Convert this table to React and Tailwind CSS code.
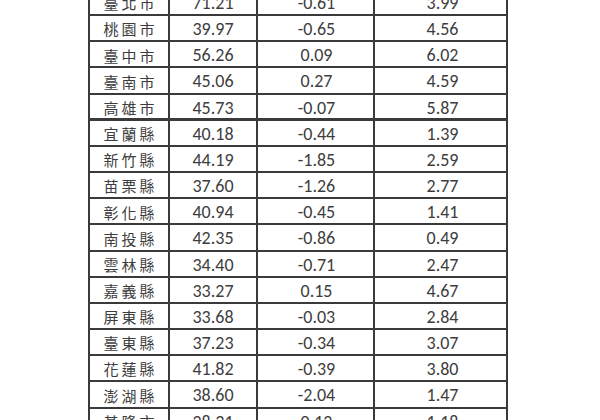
import React from "react";

const rows = [
  ["臺北市", "71.21", "-0.61", "3.99"],
  ["桃園市", "39.97", "-0.65", "4.56"],
  ["臺中市", "56.26", "0.09", "6.02"],
  ["臺南市", "45.06", "0.27", "4.59"],
  ["高雄市", "45.73", "-0.07", "5.87"],
  ["宜蘭縣", "40.18", "-0.44", "1.39"],
  ["新竹縣", "44.19", "-1.85", "2.59"],
  ["苗栗縣", "37.60", "-1.26", "2.77"],
  ["彰化縣", "40.94", "-0.45", "1.41"],
  ["南投縣", "42.35", "-0.86", "0.49"],
  ["雲林縣", "34.40", "-0.71", "2.47"],
  ["嘉義縣", "33.27", "0.15", "4.67"],
  ["屏東縣", "33.68", "-0.03", "2.84"],
  ["臺東縣", "37.23", "-0.34", "3.07"],
  ["花蓮縣", "41.82", "-0.39", "3.80"],
  ["澎湖縣", "38.60", "-2.04", "1.47"],
  ["基隆市", "28.31", "0.12", "1.18"],
];

export default function App() {
  return (
    <div className="w-[600px] h-[420px] overflow-hidden bg-white">
      <div className="ml-[88px] mt-[-10px] w-[420px] border-l-2 border-[#3a3a3a]">
        {rows.map((r, i) => (
          <div
            key={i}
            className={
              i === 4
                ? "grid grid-cols-[80px_88px_117px_133px] h-[26.17px] border-[#3a3a3a] border-b-[3px]"
                : "grid grid-cols-[80px_88px_117px_133px] h-[26.17px] border-[#3a3a3a] border-b-2"
            }
          >
            <div className="flex items-center justify-center border-r-2 border-[#3a3a3a] text-[15px] tracking-[3px] pl-[3px] text-[#3d3d3d] font-['Noto_Sans_CJK_TC','Noto_Sans_CJK_SC',sans-serif]">
              {r[0]}
            </div>
            <div className="flex items-center justify-center border-r-2 border-[#3a3a3a] text-[18px] text-[#3d3d3d] font-['Carlito','Liberation_Sans_Narrow','DejaVu_Sans_Condensed',sans-serif]">
              {r[1]}
            </div>
            <div className="flex items-center justify-center border-r-2 border-[#3a3a3a] text-[18px] text-[#3d3d3d] pl-[2px] font-['Carlito','Liberation_Sans_Narrow','DejaVu_Sans_Condensed',sans-serif]">
              {r[2]}
            </div>
            <div className="flex items-center justify-center border-r-2 border-[#3a3a3a] text-[18px] text-[#3d3d3d] pl-[4px] font-['Carlito','Liberation_Sans_Narrow','DejaVu_Sans_Condensed',sans-serif]">
              {r[3]}
            </div>
          </div>
        ))}
      </div>
    </div>
  );
}
